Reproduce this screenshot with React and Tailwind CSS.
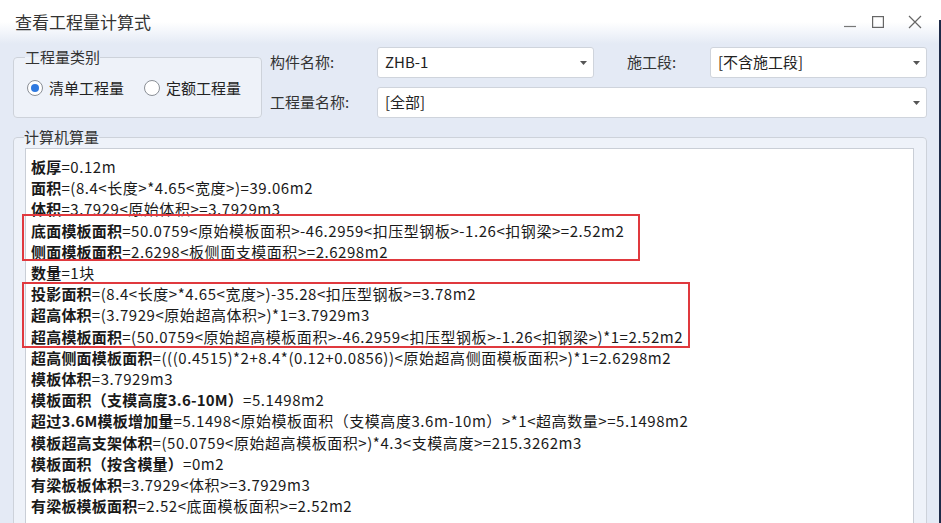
import React from 'react';

const FONT = { fontFamily: '"Noto Sans CJK SC", "Microsoft YaHei", sans-serif' };

// 计算式列表：name 为加粗部分，expr 为普通部分
const lines = [
  { name: '板厚', expr: '=0.12m' },
  { name: '面积', expr: '=(8.4<长度>*4.65<宽度>)=39.06m2' },
  { name: '体积', expr: '=3.7929<原始体积>=3.7929m3' },
  { name: '底面模板面积', expr: '=50.0759<原始模板面积>-46.2959<扣压型钢板>-1.26<扣钢梁>=2.52m2' },
  { name: '侧面模板面积', expr: '=2.6298<板侧面支模面积>=2.6298m2' },
  { name: '数量', expr: '=1块' },
  { name: '投影面积', expr: '=(8.4<长度>*4.65<宽度>)-35.28<扣压型钢板>=3.78m2' },
  { name: '超高体积', expr: '=(3.7929<原始超高体积>)*1=3.7929m3' },
  { name: '超高模板面积', expr: '=(50.0759<原始超高模板面积>-46.2959<扣压型钢板>-1.26<扣钢梁>)*1=2.52m2' },
  { name: '超高侧面模板面积', expr: '=(((0.4515)*2+8.4*(0.12+0.0856))<原始超高侧面模板面积>)*1=2.6298m2' },
  { name: '模板体积', expr: '=3.7929m3' },
  { name: '模板面积（支模高度3.6-10M）', expr: '=5.1498m2' },
  { name: '超过3.6M模板增加量', expr: '=5.1498<原始模板面积（支模高度3.6m-10m）>*1<超高数量>=5.1498m2' },
  { name: '模板超高支架体积', expr: '=(50.0759<原始超高模板面积>)*4.3<支模高度>=215.3262m3' },
  { name: '模板面积（按含模量）', expr: '=0m2' },
  { name: '有梁板板体积', expr: '=3.7929<体积>=3.7929m3' },
  { name: '有梁板模板面积', expr: '=2.52<底面模板面积>=2.52m2' },
];

function Arrow() {
  return (
    <svg width="7" height="4" viewBox="0 0 7 4" className="shrink-0">
      <path d="M0 0 L7 0 L3.5 4 Z" fill="#555" />
    </svg>
  );
}

function Select({ value, className }) {
  return (
    <div
      className={`h-[31px] bg-white border border-[#cfd4dc] rounded-[3px] flex items-center justify-between pl-[7px] pr-[6px] text-[15px] text-[#222] ${className}`}
    >
      <span>{value}</span>
      <Arrow />
    </div>
  );
}

function Radio({ checked, label }) {
  return (
    <div className="flex items-center gap-[6px]">
      <span className="w-[16px] h-[16px] rounded-full border border-[#8a8f96] bg-white flex items-center justify-center">
        {checked && <span className="w-[8px] h-[8px] rounded-full bg-[#2f7ae0]" />}
      </span>
      <span className="text-[15px] text-[#222]">{label}</span>
    </div>
  );
}

export default function App() {
  return (
    <div className="w-[941px] h-[523px] overflow-hidden flex bg-[#e4eaf5]" style={FONT}>
      <div className="w-[939px] h-full flex flex-col">
        {/* 标题栏 */}
        <div className="h-[44px] shrink-0 flex items-center justify-between pl-[15px] pr-[17px] bg-gradient-to-b from-white via-white to-[#e4eaf5]">
          <span className="text-[17px] text-[#333]">查看工程量计算式</span>
          <div className="flex items-center gap-[16px] text-[#666]">
            <svg width="12" height="12" viewBox="0 0 12 12">
              <path d="M0 10.5 H12" stroke="#777" strokeWidth="1.2" />
            </svg>
            <svg width="12" height="12" viewBox="0 0 12 12">
              <rect x="0.6" y="0.6" width="10.8" height="10.8" fill="none" stroke="#666" strokeWidth="1.2" />
            </svg>
            <svg width="14" height="14" viewBox="0 0 14 14" className="ml-[8px]">
              <path d="M1 1 L13 13 M13 1 L1 13" stroke="#666" strokeWidth="1.2" />
            </svg>
          </div>
        </div>

        {/* 条件区 */}
        <div className="flex pl-[13px] pr-[12px] pt-[3px]">
          <fieldset className="w-[249px] h-[71px] border border-[#cdd2da] rounded-[4px] bg-[#eef2f9] px-[12px] shrink-0">
            <legend className="ml-[-1px] text-[15px] text-[#333] leading-[20px] px-0">工程量类别</legend>
            <div className="flex items-center gap-[20px] mt-[10px] ml-[1px]">
              <Radio checked label="清单工程量" />
              <Radio label="定额工程量" />
            </div>
          </fieldset>

          <div className="flex-1 ml-[8px] flex flex-col gap-[9px]">
            <div className="flex items-center">
              <span className="w-[107px] text-[15px] text-[#333]">构件名称:</span>
              <Select value="ZHB-1" className="w-[217px]" />
              <span className="w-[83px] ml-[33px] text-[15px] text-[#333]">施工段:</span>
              <Select value="[不含施工段]" className="flex-1" />
            </div>
            <div className="flex items-center">
              <span className="w-[107px] text-[15px] text-[#333]">工程量名称:</span>
              <Select value="[全部]" className="flex-1" />
            </div>
          </div>
        </div>

        {/* 计算机算量 */}
        <div className="relative flex-1 pl-[13px] pr-[12px] mt-[9px]">
          <fieldset className="h-[420px] border border-[#cdd2da] rounded-[4px] bg-[#eef2f9] pl-[11px] pr-[12px]">
            <legend className="ml-[-1px] text-[15px] text-[#333] leading-[20px] px-0">计算机算量</legend>
            <div className="bg-white border border-[#c9ced6] h-[400px] mt-[1px] pl-[5px] pt-[7px]">
              {lines.map((l) => (
                <div key={l.name} className="text-[15px] leading-[21.2px] tracking-[0.55px] text-[#1a1a1a] whitespace-nowrap">
                  <span className="font-bold tracking-[0.2px]">{l.name}</span>
                  <span>{l.expr}</span>
                </div>
              ))}
            </div>
          </fieldset>

          {/* 红框标注 */}
          <div className="absolute left-[22px] top-[87px] w-[618px] h-[47px] border-[2.5px] border-[#e0393e] pointer-events-none" />
          <div className="absolute left-[22px] top-[155px] w-[668px] h-[66px] border-[2.5px] border-[#e0393e] pointer-events-none" />
        </div>
      </div>
      <div className="w-[2px] h-full flex flex-col">
        <div className="h-[20px] bg-white" />
        <div className="flex-1 bg-[#1d2a48]" />
      </div>
    </div>
  );
}
